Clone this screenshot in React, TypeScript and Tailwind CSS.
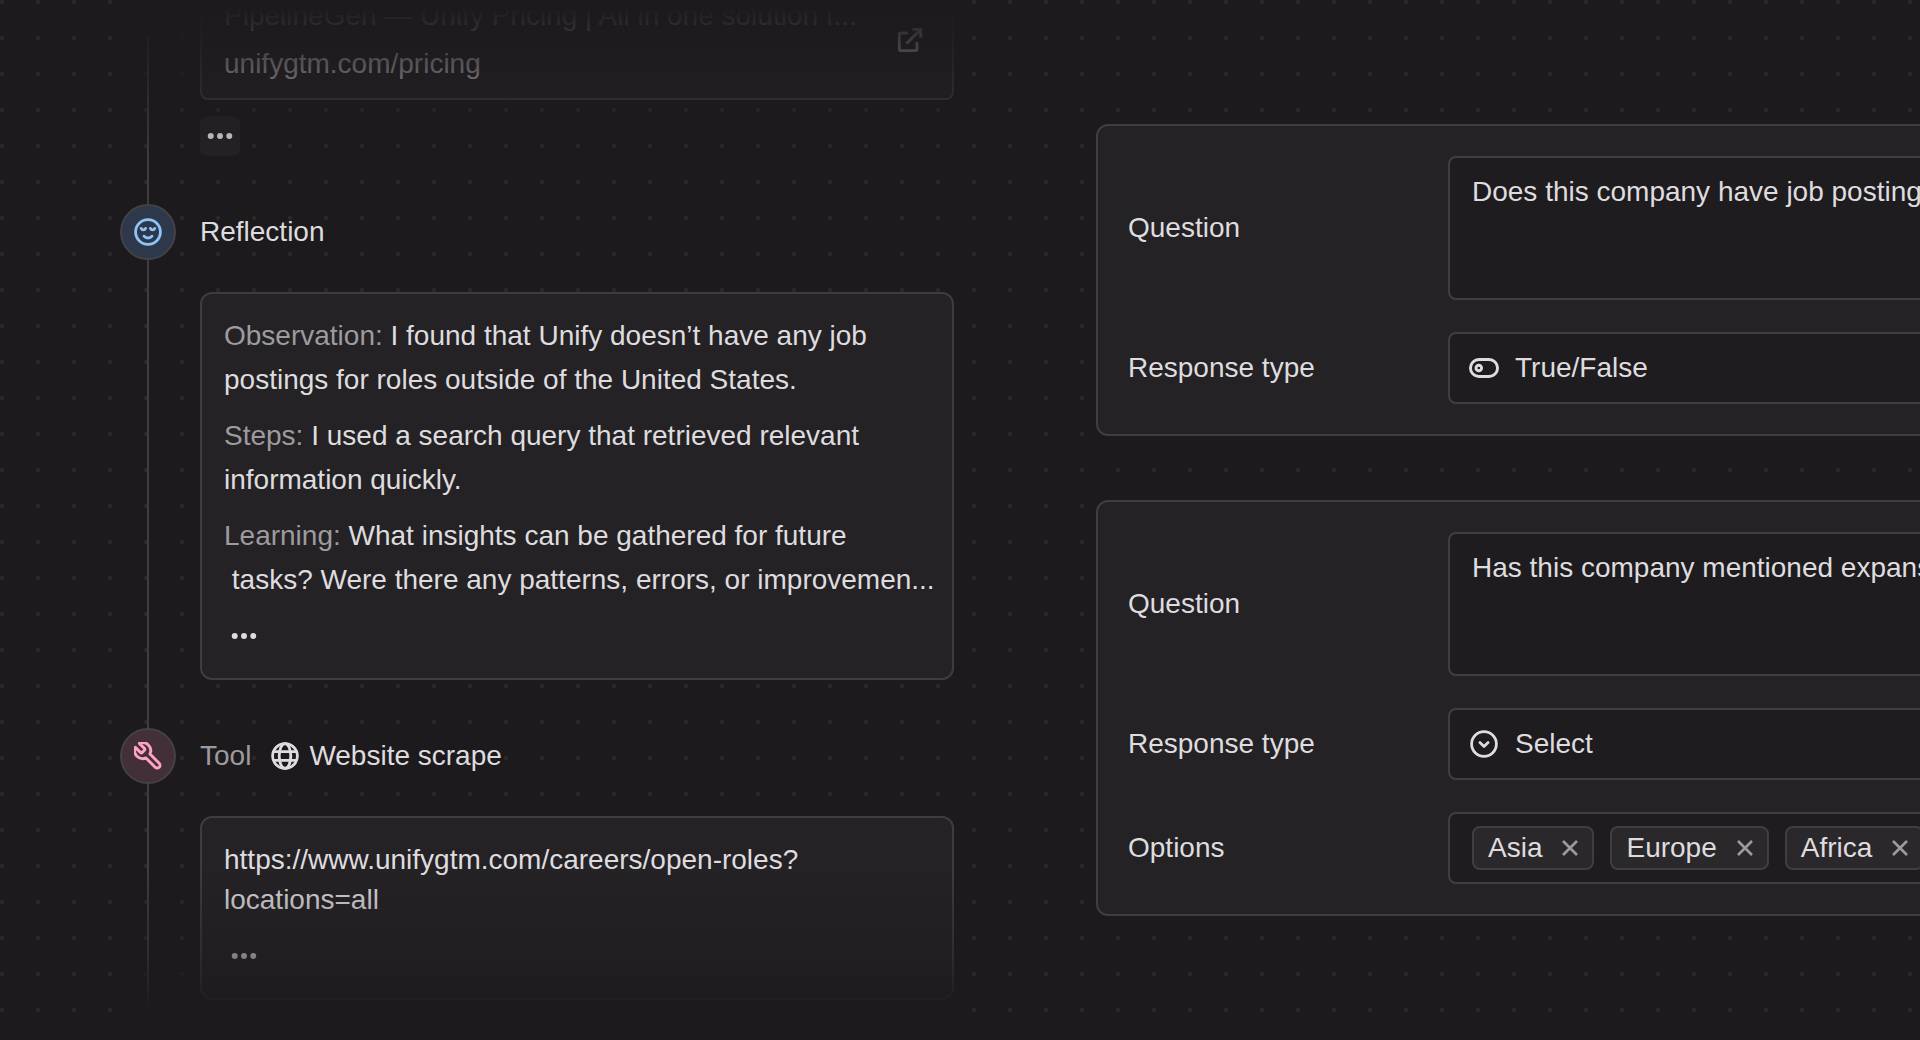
import React, { useId } from "react";

type IconProps = { className?: string };

function EllipsisIcon({ className }: IconProps) {
  return (
    <svg viewBox="0 0 28 28" className={className} fill="currentColor" aria-hidden="true">
      <circle cx="4" cy="14" r="3.2" />
      <circle cx="14" cy="14" r="3.2" />
      <circle cx="24" cy="14" r="3.2" />
    </svg>
  );
}

function ExternalIcon({ className }: IconProps) {
  return (
    <svg viewBox="0 0 28 28" className={className} fill="none" stroke="currentColor" strokeWidth="2.8" aria-hidden="true">
      <path d="M12 7H5.300A2 2 0 0 0 3.300 9v13.700a2 2 0 0 0 2 2H19a2 2 0 0 0 2-2v-6.700" />
      <path d="M10.500 17.500 24.600 3.400M16.500 3.300h8.200v8.200" />
    </svg>
  );
}

function FaceIcon({ className }: IconProps) {
  return (
    <svg viewBox="0 0 28 28" className={className} fill="none" stroke="currentColor" strokeWidth="2.800" strokeLinecap="round" aria-hidden="true">
      <circle cx="14" cy="14" r="12.400" />
      <path d="M7.200 10.400c.5 1.200 1.300 1.500 2.200 1.500s1.700-.3 2.200-1.500M16.400 10.400c.5 1.200 1.300 1.500 2.200 1.500s1.700-.3 2.200-1.500M10 18.200c1 1.300 2.400 1.800 4 1.800s3-.5 4-1.800" />
    </svg>
  );
}

function WrenchIcon({ className }: IconProps) {
  return (
    <svg viewBox="1.500 1.500 21 21" className={className} fill="none" stroke="currentColor" strokeWidth="2.200" strokeLinejoin="round" strokeLinecap="round" aria-hidden="true">
      <path d="M9.300 6.300a1 1 0 0 1 0 1.400L7.700 9.300a1 1 0 0 1-1.400 0L2.530 5.530a6 6 0 0 0 7.940 7.940l6.910 6.910a2.120 2.120 0 0 0 3-3l-6.910-6.910a6 6 0 0 0-7.940-7.940z" />
    </svg>
  );
}

function GlobeIcon({ className }: IconProps) {
  return (
    <svg viewBox="0 0 28 28" className={className} fill="none" stroke="currentColor" strokeWidth="2.800" aria-hidden="true">
      <circle cx="14" cy="14" r="12.400" />
      <ellipse cx="14" cy="14" rx="5.800" ry="12.400" />
      <path d="M2.600 9.700h22.800M2.600 18.300h22.800" />
    </svg>
  );
}

function ToggleIcon({ className }: IconProps) {
  return (
    <svg viewBox="0 0 30 28" className={className} fill="none" stroke="currentColor" strokeWidth="2.900" aria-hidden="true">
      <rect x="1.450" y="5.450" width="27.100" height="17.100" rx="8.550" />
      <circle cx="9.800" cy="14" r="2.800" />
    </svg>
  );
}

function SelectIcon({ className }: IconProps) {
  return (
    <svg viewBox="0 0 30 28" className={className} fill="none" stroke="currentColor" strokeWidth="2.800" strokeLinecap="round" strokeLinejoin="round" aria-hidden="true">
      <circle cx="15" cy="14" r="12.400" />
      <path d="m10.900 12.600 4.100 3.900 4.100-3.900" />
    </svg>
  );
}

function CloseIcon({ className }: IconProps) {
  return (
    <svg viewBox="0 0 16 16" className={className} fill="none" stroke="currentColor" strokeWidth="2.600" aria-hidden="true">
      <path d="m1 1 14 14M15 1 1 15" />
    </svg>
  );
}

function MoreButton({ className = "" }: IconProps) {
  return (
    <button type="button" aria-label="Show more" className={`flex size-10 items-center justify-center rounded-lg ${className}`}>
      <EllipsisIcon className="size-[26px]" />
    </button>
  );
}

function StepHeader({ badge, children }: { badge: React.ReactNode; children: React.ReactNode }) {
  return (
    <div className="flex h-14 items-center gap-6">
      {badge}
      <h2 className="flex items-center">{children}</h2>
    </div>
  );
}

function Note({ label, children }: { label: string; children: React.ReactNode }) {
  return (
    <p className="leading-[44px] whitespace-nowrap">
      <span className="text-[#9d9b9e]">{label}</span> {children}
    </p>
  );
}

function Timeline() {
  return (
    <section className="relative ml-[120px] w-[840px] max-w-[50vw] shrink-0 pr-1.5">
      <div className="absolute top-[38px] bottom-7 left-[27px] w-0.5 bg-[#3e3c40]" />

      <div className="relative -mt-5">
        <div className="ml-20 flex items-center justify-between rounded-lg border-2 border-[#3e3c40] bg-[#242225] px-[22px] py-2.5">
          <div className="min-w-0 leading-[48px]">
            <p className="truncate">PipelineGen — Unify Pricing | All in one solution f...</p>
            <p>unifygtm.com/pricing</p>
          </div>
          <a href="#pricing" aria-label="Open unifygtm.com/pricing" className="mr-1.5">
            <ExternalIcon className="size-7" />
          </a>
        </div>
        <MoreButton className="mt-4 ml-20 bg-[#242225]" />

        <div className="mt-12">
          <StepHeader
            badge={
              <span className="flex size-14 items-center justify-center rounded-full border-2 border-[#434144] bg-[#2d394a] text-[#8fc2f7]">
                <FaceIcon className="size-7" />
              </span>
            }
          >
            Reflection
          </StepHeader>
          <div className="mt-8 ml-20 rounded-xl border-2 border-[#3e3c40] bg-[#242225] px-[22px] pt-5 pb-[22px]">
            <div className="flex flex-col gap-3">
              <Note label="Observation:">
                I found that Unify doesn’t have any job
                <br />
                postings for roles outside of the United States.
              </Note>
              <Note label="Steps:">
                I used a search query that retrieved relevant
                <br />
                information quickly.
              </Note>
              <Note label="Learning:">
                What insights can be gathered for future
                <br />
                &nbsp;tasks? Were there any patterns, errors, or improvemen...
              </Note>
            </div>
            <MoreButton className="mt-3.5" />
          </div>
        </div>

        <div className="mt-12">
          <StepHeader
            badge={
              <span className="flex size-14 items-center justify-center rounded-full border-2 border-[#434144] bg-[#432f39] text-[#ffa3c4]">
                <WrenchIcon className="size-7" />
              </span>
            }
          >
            <span className="text-[#9d9b9e]">Tool</span>
            <GlobeIcon className="mr-2.5 ml-5 size-7" />
            Website scrape
          </StepHeader>
          <div className="mt-8 ml-20 rounded-xl border-2 border-[#3e3c40] bg-[#242225] p-[22px]">
            <p className="leading-10">
              https://www.unifygtm.com/careers/open-roles?
              <br />
              locations=all
            </p>
            <MoreButton className="mt-4" />
          </div>
        </div>
      </div>

      <div className="pointer-events-none absolute inset-x-0 top-0 h-[164px] bg-linear-to-b from-[#1c1a1d] from-5% via-[#1c1a1d]/70 via-40% to-[#1c1a1d]/0" />
      <div className="pointer-events-none absolute inset-x-0 bottom-0 h-[172px] bg-linear-to-t from-[#1c1a1d] from-15% via-[#1c1a1d]/45 via-50% to-[#1c1a1d]/0" />
    </section>
  );
}

const fieldBox = "w-full rounded-lg border-2 border-[#403e42] bg-[#1e1c1f]";

function FormRow({ label, htmlFor, children }: { label: string; htmlFor: string; children: React.ReactNode }) {
  return (
    <div className="grid grid-cols-[320px_1fr] items-center">
      <label htmlFor={htmlFor}>{label}</label>
      {children}
    </div>
  );
}

function QuestionCard({
  question,
  type,
  icon,
  options,
}: {
  question: string;
  type: string;
  icon: React.ReactNode;
  options?: string[];
}) {
  const id = useId();
  return (
    <div className="flex flex-col gap-8 rounded-xl border-2 border-[#403e42] bg-[#242225] p-[30px]">
      <FormRow label="Question" htmlFor={`${id}-question`}>
        <textarea
          id={`${id}-question`}
          defaultValue={question}
          className={`${fieldBox} block h-36 resize-none overflow-hidden px-[22px] py-4 leading-9 whitespace-pre outline-none`}
        />
      </FormRow>
      <FormRow label="Response type" htmlFor={`${id}-type`}>
        <div className={`${fieldBox} flex h-[72px] items-center gap-4 pl-[19px]`}>
          {icon}
          <select id={`${id}-type`} defaultValue={type} className="h-full grow appearance-none bg-transparent outline-none">
            <option>True/False</option>
            <option>Select</option>
          </select>
        </div>
      </FormRow>
      {options && (
        <FormRow label="Options" htmlFor={`${id}-options`}>
          <div className={`${fieldBox} flex h-[72px] items-center gap-4 px-[22px]`}>
            {options.map((option) => (
              <span key={option} className="flex h-11 items-center gap-5 rounded-lg border-2 border-[#403e42] bg-[#2a282b] px-3.5">
                {option}
                <button type="button" aria-label={`Remove ${option}`} className="text-[#9d9b9e]">
                  <CloseIcon className="size-4" />
                </button>
              </span>
            ))}
            <input id={`${id}-options`} className="min-w-0 grow bg-transparent outline-none" />
          </div>
        </FormRow>
      )}
    </div>
  );
}

export default function App() {
  return (
    <main className="flex min-h-screen overflow-hidden bg-[#1c1a1d] bg-[radial-gradient(circle_at_2px_2px,#2b292c_1.5px,transparent_2.5px)] bg-[length:36px_36px] font-['Liberation_Sans',Arial,sans-serif] text-[28px] leading-9 text-[#dedcdf]">
      <Timeline />
      <section className="ml-[136px] flex min-w-[1000px] grow flex-col gap-16 pt-[124px]">
        <QuestionCard
          question="Does this company have job postings"
          type="True/False"
          icon={<ToggleIcon className="h-7 w-[30px] shrink-0" />}
        />
        <QuestionCard
          question="Has this company mentioned expansion"
          type="Select"
          icon={<SelectIcon className="h-7 w-[30px] shrink-0" />}
          options={["Asia", "Europe", "Africa"]}
        />
      </section>
    </main>
  );
}
